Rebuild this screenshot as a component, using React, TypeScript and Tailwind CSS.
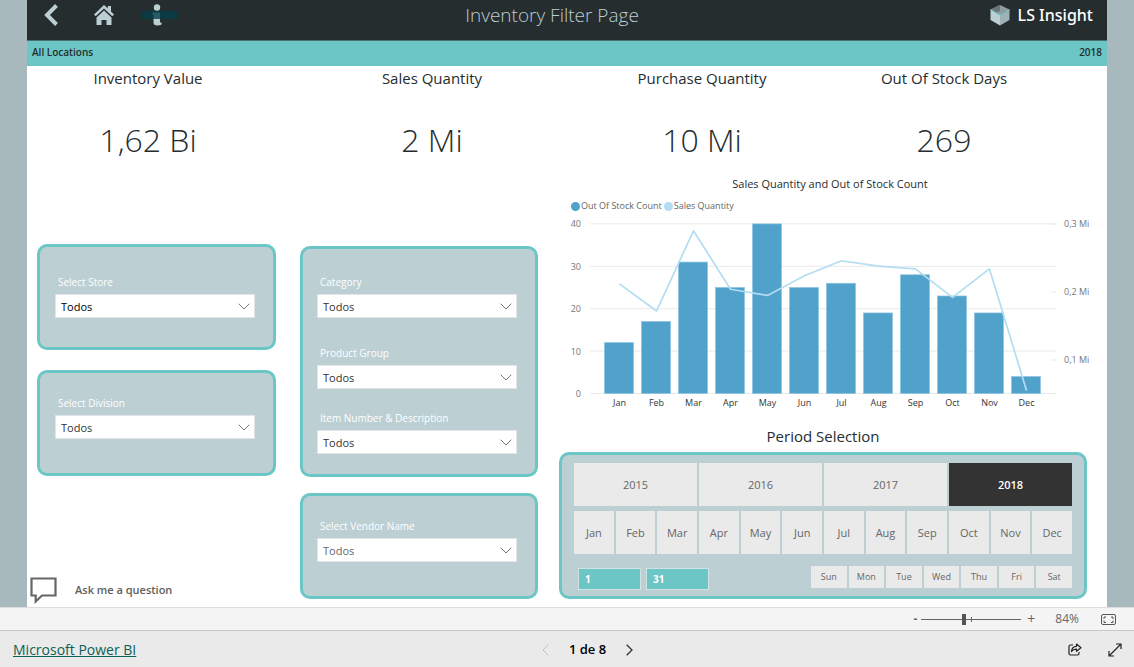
import React, { useState } from 'react';

interface FilterSelectProps {
  id: string;
  label: string;
  tone?: string;
}

const kpis = [
  { title: 'Inventory Value', value: '1,62 Bi' },
  { title: 'Sales Quantity', value: '2 Mi' },
  { title: 'Purchase Quantity', value: '10 Mi' },
  { title: 'Out Of Stock Days', value: '269' },
];

const years = ['2015', '2016', '2017', '2018'];
const months = ['Jan', 'Feb', 'Mar', 'Apr', 'May', 'Jun', 'Jul', 'Aug', 'Sep', 'Oct', 'Nov', 'Dec'];
const weekDays = ['Sun', 'Mon', 'Tue', 'Wed', 'Thu', 'Fri', 'Sat'];

const outOfStock = [12, 17, 31, 25, 40, 25, 26, 19, 28, 23, 19, 4];
const salesQuantity = [0.212, 0.172, 0.29, 0.204, 0.195, 0.224, 0.246, 0.238, 0.234, 0.192, 0.234, 0.055];

const FilterSelect: React.FC<FilterSelectProps> = ({ id, label, tone = 'text-[#333333]' }) => (
  <div>
    <label htmlFor={id} className="block h-5 pl-[3px] text-[10px] leading-4 text-white">
      {label}
    </label>
    <div className="relative">
      <select
        id={id}
        defaultValue="Todos"
        className={`block h-6 w-full appearance-none rounded-none border border-[#e0e6e7] bg-white pt-[2px] pl-[5px] text-[11px] ${tone}`}
      >
        <option>Todos</option>
      </select>
      <svg
        viewBox="0 0 12 7"
        className="pointer-events-none absolute right-[5px] top-[9px] h-[7px] w-3 fill-none stroke-[#777777]"
      >
        <path d="M.7.7 6 6 11.300.7" />
      </svg>
    </div>
  </div>
);

const StockChart: React.FC = () => {
  const centerX = (i: number) => 60.5 + i * 37;
  const lineY = (v: number) => 212 - v * 680;
  const points = salesQuantity.map((v, i) => `${centerX(i)},${lineY(v)}`).join(' ');

  return (
    <svg viewBox="0 0 528 194" className="block w-full overflow-visible text-[9px]" role="img" aria-label="Sales Quantity and Out of Stock Count">
      {[0, 10, 20, 30, 40].map((v) => (
        <g key={v}>
          <line x1="31" x2="497" y1={177.5 - v * 4.24} y2={177.5 - v * 4.24} stroke="#eaeaea" />
          <text x="22" y={181 - v * 4.24} textAnchor="end" fill="#777777">{v}</text>
        </g>
      ))}
      {[1, 2, 3].map((v) => (
        <g key={v}>
          <line x1="492" x2="497" y1={212 - v * 68} y2={212 - v * 68} stroke="#eaeaea" />
          <text x="505" y={215 - v * 68} fill="#777777">{`0,${v} Mi`}</text>
        </g>
      ))}
      {outOfStock.map((v, i) => (
        <g key={months[i]}>
          <rect
            x={centerX(i) - 15}
            y={177.5 - v * 4.24}
            width="29"
            height={v * 4.24}
            fill="#51a2cb"
            stroke="#8cc4e0"
            strokeWidth=".7"
          />
          <text x={centerX(i)} y="190" textAnchor="middle" fill="#333333">{months[i]}</text>
        </g>
      ))}
      <polyline points={points} fill="none" stroke="#b3ddf2" strokeWidth="1.7" strokeLinejoin="round" />
    </svg>
  );
};

const PeriodPicker: React.FC = () => {
  const [year, setYear] = useState('2018');

  return (
    <div className="rounded-[10px] border-3 border-[#6bc6c5] bg-[#bccfd3] px-3 pt-2 pb-[6px]">
      <div className="grid grid-cols-4 gap-[2px]">
        {years.map((y) => (
          <button
            key={y}
            onClick={() => setYear(y)}
            className={`h-[43px] pt-[2px] text-[11px] ${
              y === year ? 'bg-[#333333] font-semibold text-white' : 'bg-[#eaeaea] text-[#666666]'
            }`}
          >
            {y}
          </button>
        ))}
      </div>
      <div className="mt-[5px] grid grid-cols-12 gap-[2px]">
        {months.map((m) => (
          <button key={m} className="h-[43px] bg-[#eaeaea] pt-[2px] text-[11px] text-[#666666]">
            {m}
          </button>
        ))}
      </div>
      <div className="mt-3 flex justify-between pl-1">
        <div className="mt-[2px] flex gap-[5px]">
          <input
            aria-label="First day"
            defaultValue="1"
            className="h-[22px] w-[63px] border border-[#cfe3e5] bg-[#6bc6c5] pl-[6px] text-[10px] font-bold text-white"
          />
          <input
            aria-label="Last day"
            defaultValue="31"
            className="h-[22px] w-[63px] border border-[#cfe3e5] bg-[#6bc6c5] pl-[6px] text-[10px] font-bold text-white"
          />
        </div>
        <div className="grid w-[261px] grid-cols-7 gap-[2px]">
          {weekDays.map((d) => (
            <button key={d} className="h-[22px] bg-[#eaeaea] text-[9px] text-[#666666]">
              {d}
            </button>
          ))}
        </div>
      </div>
    </div>
  );
};

const App: React.FC = () => {
  const [zoom, setZoom] = useState(42);

  return (
    <div className="flex min-h-screen flex-col bg-[#a7b9bd] font-['Open_Sans','Noto_Sans',sans-serif] text-[#252d2f]">
      <div className="mx-[27px] flex flex-1 flex-col bg-white">
        <header className="grid h-[41px] grid-cols-[1fr_auto_1fr] items-center border-b border-[#45706f] bg-[#252d2f] pr-[14px] pb-[10px] pl-4">
          <nav className="flex items-center">
            <button aria-label="Back" className="mr-[34px]">
              <svg viewBox="0 0 16 22" className="h-[22px] w-4 fill-none stroke-[#bccfd3]" strokeWidth="4">
                <path d="M13.500 1.500 4 11l9.500 9.500" />
              </svg>
            </button>
            <button aria-label="Home" className="mr-[26px]">
              <svg viewBox="0 0 22 22" className="h-[22px] w-[22px] fill-[#bccfd3]">
                <path d="M11 1 1 10.500l1.700 1.800L11 4.600l8.300 7.700 1.700-1.800-3-2.900V2h-3.200v2.600z" />
                <path d="M11 6.500 3.500 13.400V21h5v-5h5v5h5v-7.600z" />
              </svg>
            </button>
            <button aria-label="Information">
              <svg viewBox="0 0 36 22" className="h-[22px] w-9">
                <circle cx="16" cy="3.500" r="3.200" fill="#bccfd3" />
                <path d="M11.500 8.500H19v9.200q0 1.300 1.600.8v1.900q-1.700 1-4.300 1-3.800 0-3.800-3.200v-7.400h-1z" fill="#bccfd3" />
                <path d="M1 7h35v8H1z" fill="#063d49" fillOpacity=".8" />
              </svg>
            </button>
          </nav>
          <h1 className="pr-8 text-[19px] leading-6 font-light text-[#bccfd3]">Inventory Filter Page</h1>
          <div className="flex items-center justify-end gap-2 text-white">
            <svg viewBox="0 0 20 22" className="h-[22px] w-5">
              <path d="M.5 5.500 10 1l9.500 4.500L10 11z" fill="#8e9c9f" />
              <path d="M10 1v6l-5 2.200L.5 5.500z" fill="#697577" />
              <path d="M.5 5.500 10 11v10.500L.5 16z" fill="#bccfd3" />
              <path d="M19.500 5.500 10 11v10.500l9.500-5.500z" fill="#9eb2b7" />
              <path d="M.5 5.500 10 11l9.500-5.500" fill="none" stroke="#6bc6c5" />
            </svg>
            <span className="font-['Noto_Sans',sans-serif] text-base leading-6 font-medium">LS Insight</span>
          </div>
        </header>

        <div className="flex h-[25px] items-center justify-between bg-[#6bc6c5] px-[5px] pb-[2px] text-[10px] font-semibold">
          <span>All Locations</span>
          <span>2018</span>
        </div>

        <section className="grid grid-cols-[242fr_326fr_214fr_270fr] pr-7 text-center">
          {kpis.map((kpi) => (
            <div key={kpi.title}>
              <h2 className="text-[15px] leading-6">{kpi.title}</h2>
              <p className="mt-[26px] text-[32px] leading-12 font-light">{kpi.value}</p>
            </div>
          ))}
        </section>

        <main className="grid flex-1 grid-cols-[246fr_262fr_549fr] pt-2 pr-5 pl-[3px]">
          <div className="flex flex-col pt-[72px]">
            <div className="ml-[7px] rounded-[10px] border-3 border-[#6bc6c5] bg-[#bccfd3] pt-[27px] pr-[18px] pb-[29px] pl-[15px]">
              <FilterSelect id="store" label="Select Store" tone="text-black" />
            </div>
            <div className="mt-5 ml-[7px] rounded-[10px] border-3 border-[#6bc6c5] bg-[#bccfd3] pt-[22px] pr-[18px] pb-[34px] pl-[15px]">
              <FilterSelect id="division" label="Select Division" />
            </div>
            <button className="mt-auto mb-[3px] flex items-center gap-[18px] text-[11px] font-semibold text-[#605e5c]">
              <svg viewBox="0 0 27 27" className="h-[27px] w-[27px] fill-none stroke-[#666666]" strokeWidth="2.200">
                <path d="M1.500 1.500h24v17H12l-6.300 6v-6H1.500z" />
              </svg>
              Ask me a question
            </button>
          </div>

          <div className="ml-6 pt-[74px]">
            <div className="rounded-[10px] border-3 border-[#6bc6c5] bg-[#bccfd3] pt-[25px] pr-[18px] pb-5 pl-[14px]">
              <FilterSelect id="category" label="Category" />
              <div className="mt-[27px]">
                <FilterSelect id="product-group" label="Product Group" />
              </div>
              <div className="mt-[21px]">
                <FilterSelect id="item" label="Item Number & Description" />
              </div>
            </div>
            <div className="mt-4 rounded-[10px] border-3 border-[#6bc6c5] bg-[#bccfd3] pt-[22px] pr-[18px] pb-[34px] pl-[14px]">
              <FilterSelect id="vendor" label="Select Vendor Name" tone="text-[#666666]" />
            </div>
          </div>

          <div className="ml-[21px]">
            <h3 className="pl-[14px] text-center text-[11px] leading-6">Sales Quantity and Out of Stock Count</h3>
            <div className="flex h-5 items-center gap-[2px] pl-3 text-[9px] text-[#666666]">
              <span className="flex items-center gap-px">
                <span className="h-[9px] w-[9px] rounded-full bg-[#51a2cb]" />
                Out Of Stock Count
              </span>
              <span className="flex items-center gap-px">
                <span className="h-[9px] w-[9px] rounded-full bg-[#b3ddf2]" />
                Sales Quantity
              </span>
            </div>
            <StockChart />
            <h3 className="mt-[14px] mb-1 text-center text-[15px] leading-6">Period Selection</h3>
            <PeriodPicker />
          </div>
        </main>
      </div>

      <div className="flex h-[23px] items-center justify-end border-t border-[#dddddd] bg-[#f4f4f4] pr-[18px] text-xs text-[#666666]">
        <button aria-label="Zoom out" className="mr-1 font-bold">-</button>
        <div className="relative flex items-center">
          <input
            type="range"
            aria-label="Zoom"
            value={zoom}
            onChange={(e) => setZoom(Number(e.target.value))}
            className="h-3 w-[100px] appearance-none bg-transparent bg-[linear-gradient(#666666,#666666)] bg-[length:100%_1px] bg-center bg-no-repeat [&::-webkit-slider-thumb]:h-[11px] [&::-webkit-slider-thumb]:w-1 [&::-webkit-slider-thumb]:appearance-none [&::-webkit-slider-thumb]:bg-[#555555]"
          />
          <span className="pointer-events-none absolute left-1/2 h-[5px] w-px bg-[#666666]" />
        </div>
        <button aria-label="Zoom in" className="ml-[6px] text-sm">+</button>
        <span className="ml-5">84%</span>
        <button aria-label="Fit to page" className="ml-[22px]">
          <svg viewBox="0 0 15 11" className="h-[11px] w-[15px] fill-none stroke-[#555555]">
            <rect x=".5" y=".5" width="14" height="10" rx="1.500" />
            <path d="M3 5V3h2M10 3h2v2M3 6.500v2h2M10 8.500h2v-2" />
          </svg>
        </button>
      </div>

      <footer className="grid h-[37px] grid-cols-[1fr_auto_1fr] items-center border-t border-[#c8c8c8] bg-[#eaeaea] pt-[2px] pr-3 pl-[13px]">
        <a href="#powerbi" className="text-sm text-[#0c6157] underline">Microsoft Power BI</a>
        <div className="flex items-center gap-5 pl-10 text-[13px] font-semibold text-black">
          <button aria-label="Previous page">
            <svg viewBox="0 0 7 12" className="h-3 w-[7px] fill-none stroke-[#c0c0c0]">
              <path d="M6.300.7 1 6l5.300 5.300" />
            </svg>
          </button>
          <span>1 de 8</span>
          <button aria-label="Next page">
            <svg viewBox="0 0 7 12" className="h-3 w-[7px] fill-none stroke-[#333333]" strokeWidth="1.300">
              <path d="M.7.7 6 6 .7 11.300" />
            </svg>
          </button>
        </div>
        <div className="flex items-center justify-end gap-[26px]">
          <button aria-label="Share">
            <svg viewBox="0 0 14 14" className="h-[14px] w-[14px] fill-none stroke-[#222222]" strokeWidth="1.200" strokeLinejoin="round">
              <path d="M5 2H2.500Q1 2 1 3.500v7Q1 12 2.500 12h7q1.500 0 1.500-1.500V9" />
              <path d="M8.500 1 13 4.700 8.500 8.300V6.200Q5.500 6 3.500 8.500q.4-5 5-5.200z" />
            </svg>
          </button>
          <button aria-label="Full screen">
            <svg viewBox="0 0 14 14" className="h-[14px] w-[14px] fill-none stroke-[#222222]" strokeWidth="1.200">
              <path d="M1 13 13 1M8 1h5v5M1 8v5h5" />
            </svg>
          </button>
        </div>
      </footer>
    </div>
  );
};

export default App;
